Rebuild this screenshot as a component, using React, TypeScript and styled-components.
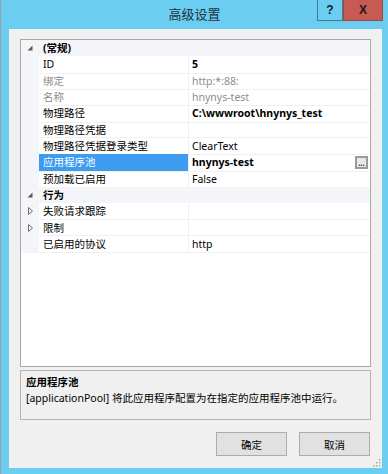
import React from 'react';
import styled, { createGlobalStyle } from 'styled-components';

const GlobalStyle = createGlobalStyle`
  html, body {
    margin: 0;
    padding: 0;
  }
  body {
    width: 388px;
    height: 474px;
    overflow: hidden;
    font-family: "Noto Sans", "Noto Sans CJK SC", sans-serif;
    font-size: 10.5px;
    color: #000;
  }
`;

const ROW_HEIGHT = 16.33;

type Prop = {
  name: string;
  value?: string;
  bold?: boolean;
  disabled?: boolean;
  selected?: boolean;
  browse?: boolean;
  expandable?: boolean;
};

type Group = {
  title: string;
  rows: Prop[];
};

const groups: Group[] = [
  {
    title: '(常规)',
    rows: [
      { name: 'ID', value: '5', bold: true },
      { name: '绑定', value: 'http:*:88:', disabled: true },
      { name: '名称', value: 'hnynys-test', disabled: true },
      { name: '物理路径', value: 'C:\\wwwroot\\hnynys_test', bold: true },
      { name: '物理路径凭据', value: '' },
      { name: '物理路径凭据登录类型', value: 'ClearText' },
      { name: '应用程序池', value: 'hnynys-test', bold: true, selected: true, browse: true },
      { name: '预加载已启用', value: 'False' },
    ],
  },
  {
    title: '行为',
    rows: [
      { name: '失败请求跟踪', expandable: true },
      { name: '限制', expandable: true },
      { name: '已启用的协议', value: 'http' },
    ],
  },
];

const Window = styled.div`
  width: 388px;
  height: 474px;
  box-sizing: border-box;
  display: flex;
  flex-direction: column;
  background: #6bcdef;
  border-left: 1px solid #9aa4a8;
`;

const TitleBar = styled.div`
  height: 29px;
  flex: none;
  display: grid;
  grid-template-columns: 1fr auto 1fr;
  align-items: start;
`;

const Title = styled.div`
  grid-column: 2;
  padding-top: 6px;
  font-size: 13px;
  line-height: 17px;
  color: #1d3440;
`;

const Caption = styled.div`
  grid-column: 3;
  justify-self: end;
  display: flex;
  margin-right: 5px;
`;

const CaptionButton = styled.div<{ $close?: boolean }>`
  box-sizing: border-box;
  width: ${({ $close }) => ($close ? 40 : 26)}px;
  height: 21px;
  display: flex;
  align-items: center;
  justify-content: center;
  background: ${({ $close }) => ($close ? '#c75a52' : '#6bcdef')};
  border: 1px solid ${({ $close }) => ($close ? '#9c4a43' : '#3e7f98')};
  border-top: none;
  font-family: "Liberation Sans", sans-serif;
  font-weight: bold;
  font-size: 12px;
  color: #1a1a1a;
`;

const Client = styled.div`
  position: relative;
  flex: 1;
  margin: 0 6px 6px 8px;
  padding: 10px 11px 12px 11px;
  background: #f0f0f0;
  display: flex;
  flex-direction: column;
`;

const PropertyGrid = styled.div`
  height: 328px;
  box-sizing: border-box;
  border: 1px solid #a8a8a8;
  background: #fff;
  display: flex;
  flex-direction: column;
`;

const Row = styled.div<{ $category?: boolean }>`
  height: ${ROW_HEIGHT}px;
  flex: none;
  display: grid;
  grid-template-columns: 18px 150px 1fr;
  background: ${({ $category }) => ($category ? '#f4f5f8' : 'transparent')};
  font-weight: ${({ $category }) => ($category ? 'bold' : 'normal')};
  line-height: ${ROW_HEIGHT}px;
`;

const Gutter = styled.div`
  display: flex;
  align-items: center;
  justify-content: center;
  background: #f4f5f8;
`;

const NameCell = styled.div<{ $selected?: boolean; $disabled?: boolean }>`
  box-sizing: border-box;
  padding-left: 4px;
  white-space: nowrap;
  overflow: hidden;
  border-right: 1px solid #f0f0f0;
  border-bottom: 1px solid #f0f0f0;
  background: ${({ $selected }) => ($selected ? '#3d9cf0' : 'transparent')};
  color: ${({ $selected, $disabled }) =>
    $selected ? '#fff' : $disabled ? '#8c8c8c' : '#000'};
`;

const CategoryTitle = styled.div`
  grid-column: 2 / 4;
  padding-left: 4px;
`;

const ValueCell = styled.div<{ $bold?: boolean; $disabled?: boolean }>`
  box-sizing: border-box;
  padding-left: 3px;
  padding-right: 2px;
  display: flex;
  align-items: center;
  justify-content: space-between;
  white-space: nowrap;
  border-bottom: 1px solid #f0f0f0;
  font-weight: ${({ $bold }) => ($bold ? 'bold' : 'normal')};
  color: ${({ $disabled }) => ($disabled ? '#8c8c8c' : '#000')};
`;

const BrowseButton = styled.div`
  box-sizing: border-box;
  width: 13px;
  height: 13px;
  border: 2px solid #9a9a9a;
  background: #e8e8e8;
  display: flex;
  align-items: flex-end;
  justify-content: center;
  font-size: 8px;
  line-height: 8px;
  font-weight: bold;
  color: #333;
`;

const Description = styled.div`
  margin-top: 3px;
  height: 50px;
  box-sizing: border-box;
  border: 1px solid #b4b4b4;
  padding: 3px 5px;
  line-height: 16px;
`;

const DescTitle = styled.div`
  font-weight: bold;
`;

const ButtonRow = styled.div`
  margin-top: 12px;
  margin-right: 1px;
  display: flex;
  justify-content: flex-end;
  gap: 12px;
`;

const Button = styled.div`
  box-sizing: border-box;
  width: 71px;
  height: 24px;
  display: flex;
  align-items: center;
  justify-content: center;
  background: #e1e1e1;
  border: 1px solid #acacac;
`;

const Grip = styled.svg`
  position: absolute;
  right: 1px;
  bottom: 1px;
`;

function Collapse() {
  return (
    <svg width="6" height="6" viewBox="0 0 6 6">
      <polygon points="5.5,0.5 5.5,5.5 0.5,5.5" fill="#595959" />
    </svg>
  );
}

function Expand() {
  return (
    <svg width="5" height="8" viewBox="0 0 5 8">
      <polygon points="0.5,0.5 4.5,4 0.5,7.5" fill="none" stroke="#6e6e6e" strokeWidth="1" />
    </svg>
  );
}

function PropRow({ prop }: { prop: Prop }) {
  return (
    <Row>
      <Gutter>{prop.expandable && <Expand />}</Gutter>
      <NameCell $selected={prop.selected} $disabled={prop.disabled}>
        {prop.name}
      </NameCell>
      <ValueCell $bold={prop.bold} $disabled={prop.disabled}>
        <span>{prop.value}</span>
        {prop.browse && <BrowseButton>...</BrowseButton>}
      </ValueCell>
    </Row>
  );
}

export default function App() {
  return (
    <>
      <GlobalStyle />
      <Window>
        <TitleBar>
          <Title>高级设置</Title>
          <Caption>
            <CaptionButton>?</CaptionButton>
            <CaptionButton $close>X</CaptionButton>
          </Caption>
        </TitleBar>
        <Client>
          <PropertyGrid>
            {groups.map((group) => (
              <React.Fragment key={group.title}>
                <Row $category>
                  <Gutter>
                    <Collapse />
                  </Gutter>
                  <CategoryTitle>{group.title}</CategoryTitle>
                </Row>
                {group.rows.map((prop) => (
                  <PropRow prop={prop} key={prop.name} />
                ))}
              </React.Fragment>
            ))}
          </PropertyGrid>
          <Description>
            <DescTitle>应用程序池</DescTitle>
            <div>[applicationPool] 将此应用程序配置为在指定的应用程序池中运行。</div>
          </Description>
          <ButtonRow>
            <Button>确定</Button>
            <Button>取消</Button>
          </ButtonRow>
          <Grip width="9" height="9" viewBox="0 0 9 9">
            {[
              [7, 1],
              [7, 4],
              [4, 4],
              [7, 7],
              [4, 7],
              [1, 7],
            ].map(([x, y]) => (
              <rect key={`${x}-${y}`} x={x} y={y} width="1.5" height="1.5" fill="#a8a8a8" />
            ))}
          </Grip>
        </Client>
      </Window>
    </>
  );
}
